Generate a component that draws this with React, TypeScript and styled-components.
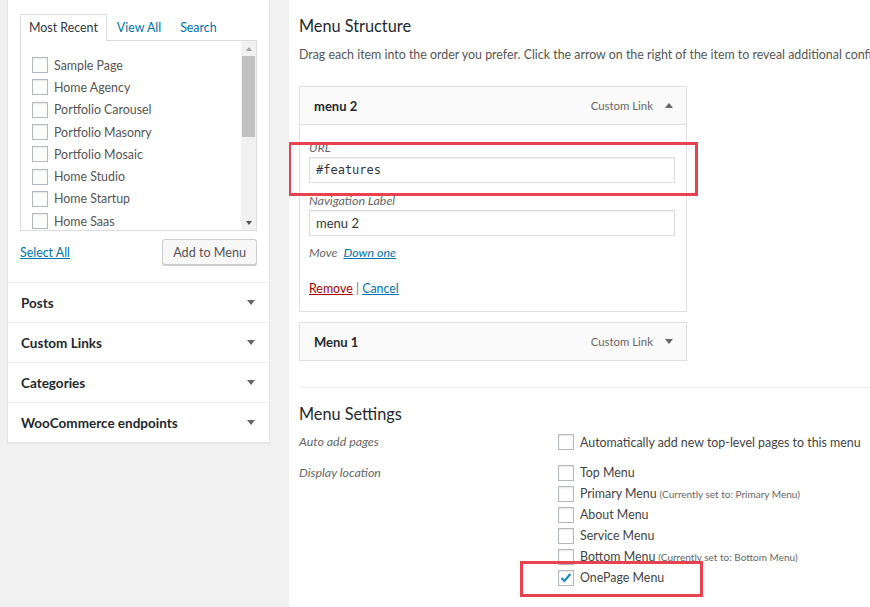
import styled, { createGlobalStyle } from "styled-components";

const GlobalStyle = createGlobalStyle`
  html, body {
    margin: 0;
    padding: 0;
    background: #f1f1f1;
  }
  body {
    font-family: Lato, "Open Sans", "Liberation Sans", sans-serif;
    font-size: 12.4px;
    color: #444;
  }
`

const Page = styled.div`
  display: flex;
  align-items: flex-start;
  height: 607px;
  padding-left: 7px;
  overflow: hidden;
`

const Sidebar = styled.aside`
  width: 263px;
  flex-shrink: 0;
  margin-right: 19px;
  background: #fff;
  border: 1px solid #e5e5e5;
  border-top: none;
  box-sizing: border-box;
  box-shadow: 0 1px 1px rgba(0, 0, 0, .04);
`

const PagesBox = styled.div`
  padding: 14px 12px 17px 12px;
`

const Tabs = styled.div`
  display: flex;
  height: 26px;
  align-items: stretch;
`

const Tab = styled.span<{ $active?: boolean }>`
  display: flex;
  align-items: center;
  padding: 0 8px 2px;
  margin-right: 1px;
  color: ${(p) => (p.$active ? "#32373c" : "#0073aa")};
  background: ${(p) => (p.$active ? "#fff" : "transparent")};
  border: 1px solid ${(p) => (p.$active ? "#ddd" : "transparent")};
  border-bottom: none;
  position: relative;
  z-index: 1;
  margin-bottom: -1px;
`

const TabPanel = styled.div`
  display: flex;
  height: 191px;
  border: 1px solid #ddd;
  box-sizing: border-box;
`

const CheckList = styled.ul`
  flex: 1;
  list-style: none;
  margin: 0;
  padding: 13px 0 0 11px;
`

const CheckRow = styled.li`
  display: flex;
  align-items: center;
  gap: 6px;
  height: 22.3px;
  color: #555;
`

const Box = styled.span`
  width: 16px;
  height: 16px;
  flex-shrink: 0;
  box-sizing: border-box;
  border: 1px solid #b4b9be;
  background: #fff;
  box-shadow: inset 0 1px 2px rgba(0, 0, 0, .1);
  display: flex;
  align-items: center;
  justify-content: center;
`

const Scrollbar = styled.div`
  width: 15px;
  background: #f1f1f1;
  display: flex;
  flex-direction: column;
  align-items: center;
`

const ScrollArrow = styled.span<{ $down?: boolean }>`
  height: 15px;
  width: 15px;
  display: flex;
  align-items: center;
  justify-content: center;
  &::before {
    content: "";
    border-left: 3.5px solid transparent;
    border-right: 3.5px solid transparent;
    ${(p) => (p.$down ? "border-top: 4px solid #505050;" : "border-bottom: 4px solid #a3a3a3;")}
  }
`

const Thumb = styled.span`
  width: 13px;
  height: 81px;
  background: #c1c1c1;
`

const Spacer = styled.span`
  flex: 1;
`

const ListFooter = styled.div`
  display: flex;
  align-items: center;
  justify-content: space-between;
  margin-top: 8px;
`

const Link = styled.a<{ $danger?: boolean; $italic?: boolean }>`
  color: ${(p) => (p.$danger ? "#a00" : "#0073aa")};
  text-decoration: underline;
  font-style: ${(p) => (p.$italic ? "italic" : "normal")};
  cursor: pointer;
`

const Button = styled.button`
  height: 26px;
  padding: 0 10px;
  font: inherit;
  font-size: 12.6px;
  color: #555;
  background: #f7f7f7;
  border: 1px solid #ccc;
  border-radius: 3px;
  box-shadow: 0 1px 0 #ccc;
`

const Section = styled.div`
  height: 40px;
  box-sizing: border-box;
  border-top: 1px solid #eee;
  display: flex;
  align-items: center;
  justify-content: space-between;
  padding: 0 14px 0 13px;
  font-weight: 700;
  font-size: 13.5px;
  color: #23282d;
`

const Caret = styled.span<{ $up?: boolean; $size?: number }>`
  width: 0;
  height: 0;
  border-left: ${(p) => (p.$size ?? 4.5)}px solid transparent;
  border-right: ${(p) => (p.$size ?? 4.5)}px solid transparent;
  ${(p) =>
    p.$up
      ? `border-bottom: ${(p.$size ?? 4.5) + 1}px solid #666;`
      : `border-top: ${(p.$size ?? 4.5) + 1}px solid #666;`}
`

const Main = styled.main`
  flex: 1;
  align-self: stretch;
  background: #fff;
  padding-left: 10px;
  white-space: nowrap;
  overflow: hidden;
`

const Heading = styled.h3`
  margin: 16px 0 0;
  line-height: 20px;
  font-size: 16.3px;
  font-weight: 400;
  color: #23282d;
`

const Description = styled.p`
  margin: 10px 0 0;
  line-height: 18px;
  color: #555;
`

const MenuItem = styled.div<{ $first?: boolean }>`
  width: 388px;
  margin-top: ${(p) => (p.$first ? 22 : 10)}px;
`

const ItemBar = styled.div`
  height: 39px;
  box-sizing: border-box;
  display: flex;
  align-items: center;
  padding: 0 13px 0 14px;
  background: #fafafa;
  border: 1px solid #dfdfdf;
  font-weight: 700;
  font-size: 13px;
  color: #23282d;
`

const ItemTitle = styled.span`
  flex: 1;
`

const ItemType = styled.span`
  font-weight: 400;
  font-size: 11.4px;
  color: #666;
  margin-right: 12px;
`

const ItemSettings = styled.div`
  height: 187px;
  box-sizing: border-box;
  border: 1px solid #dfdfdf;
  border-top: none;
  padding: 15px 11px 0 9px;
`

const Field = styled.div`
  position: relative;
  margin-bottom: 10px;
`

const FieldLabel = styled.div`
  font-style: italic;
  color: #666;
  line-height: 16px;
  margin-bottom: 1px;
`

const Input = styled.div<{ $mono?: boolean }>`
  height: 26px;
  box-sizing: border-box;
  border: 1px solid #ddd;
  box-shadow: inset 0 1px 2px rgba(0, 0, 0, .07);
  display: flex;
  align-items: center;
  padding: 0 6px;
  color: #32373c;
  font-family: ${(p) => (p.$mono ? '"DejaVu Sans Mono", "Liberation Mono", monospace' : "inherit")};
  font-size: ${(p) => (p.$mono ? "12px" : "13px")};
`

const Highlight = styled.span<{ $top: number; $left: number; $width: number; $height: number }>`
  position: absolute;
  top: ${(p) => p.$top}px;
  left: ${(p) => p.$left}px;
  width: ${(p) => p.$width}px;
  height: ${(p) => p.$height}px;
  box-sizing: border-box;
  border: 3px solid #e8414f;
  pointer-events: none;
`

const MoveLine = styled.div`
  line-height: 16px;
  margin-top: -1px;
  font-style: italic;
  color: #666;
  display: flex;
  gap: 6px;
`

const Actions = styled.div`
  margin-top: 20px;
  line-height: 16px;
  color: #777;
`

const Divider = styled.hr`
  border: none;
  border-top: 1px solid #eee;
  margin: 26px 0 0;
`

const SettingsGrid = styled.div`
  display: grid;
  grid-template-columns: 259px 1fr;
  margin-top: 7px;
  row-gap: 9px;
`

const SettingLabel = styled.div`
  font-style: italic;
  color: #666;
  line-height: 22px;
`

const Options = styled.div`
  display: flex;
  flex-direction: column;
`

const Option = styled.div`
  position: relative;
  display: flex;
  align-items: center;
  gap: 6px;
  height: 21px;
  color: #444;
`

const OptionFirst = styled(Option)`
  height: 22px;
`

const Note = styled.span`
  font-size: 10px;
  color: #666;
  margin-left: 3px;
`

const Check = () => (
  <svg width="16" height="16" viewBox="0 0 16 16">
    <path d="M2.8 8.2 L6.2 11.4 L13 3.4" fill="none" stroke="#1e8cbe" strokeWidth="2.6" />
  </svg>
)

const recentPages = [
  "Sample Page",
  "Home Agency",
  "Portfolio Carousel",
  "Portfolio Masonry",
  "Portfolio Mosaic",
  "Home Studio",
  "Home Startup",
  "Home Saas",
]

const sections = ["Posts", "Custom Links", "Categories", "WooCommerce endpoints"]

const locations: { name: string; note?: string; checked?: boolean }[] = [
  { name: "Top Menu" },
  { name: "Primary Menu", note: "(Currently set to: Primary Menu)" },
  { name: "About Menu" },
  { name: "Service Menu" },
  { name: "Bottom Menu", note: "(Currently set to: Bottom Menu)" },
  { name: "OnePage Menu", checked: true },
]

const App = () => {
  return (
    <>
      <GlobalStyle />
      <Page>
        <Sidebar>
          <PagesBox>
            <Tabs>
              <Tab $active>Most Recent</Tab>
              <Tab>View All</Tab>
              <Tab>Search</Tab>
            </Tabs>
            <TabPanel>
              <CheckList>
                {recentPages.map((p) => (
                  <CheckRow key={p}>
                    <Box />
                    {p}
                  </CheckRow>
                ))}
              </CheckList>
              <Scrollbar>
                <ScrollArrow />
                <Thumb />
                <Spacer />
                <ScrollArrow $down />
              </Scrollbar>
            </TabPanel>
            <ListFooter>
              <Link>Select All</Link>
              <Button>Add to Menu</Button>
            </ListFooter>
          </PagesBox>
          {sections.map((s) => (
            <Section key={s}>
              {s}
              <Caret />
            </Section>
          ))}
        </Sidebar>

        <Main>
          <Heading>Menu Structure</Heading>
          <Description>
            Drag each item into the order you prefer. Click the arrow on the right of the item to reveal additional configuration options.
          </Description>

          <MenuItem $first>
            <ItemBar>
              <ItemTitle>menu 2</ItemTitle>
              <ItemType>Custom Link</ItemType>
              <Caret $up $size={4} />
            </ItemBar>
            <ItemSettings>
              <Field>
                <FieldLabel>URL</FieldLabel>
                <Input $mono>#features</Input>
                <Highlight $top={2} $left={-21} $width={410} $height={54} />
              </Field>
              <Field>
                <FieldLabel>Navigation Label</FieldLabel>
                <Input>menu 2</Input>
              </Field>
              <MoveLine>
                Move <Link $italic>Down one</Link>
              </MoveLine>
              <Actions>
                <Link $danger>Remove</Link> | <Link>Cancel</Link>
              </Actions>
            </ItemSettings>
          </MenuItem>

          <MenuItem>
            <ItemBar>
              <ItemTitle>Menu 1</ItemTitle>
              <ItemType>Custom Link</ItemType>
              <Caret $size={4} />
            </ItemBar>
          </MenuItem>

          <Divider />
          <Heading>Menu Settings</Heading>

          <SettingsGrid>
            <SettingLabel>Auto add pages</SettingLabel>
            <Options>
              <OptionFirst>
                <Box />
                Automatically add new top-level pages to this menu
              </OptionFirst>
            </Options>
            <SettingLabel>Display location</SettingLabel>
            <Options>
              {locations.map((l) => (
                <Option key={l.name}>
                  <Box>{l.checked && <Check />}</Box>
                  <span>
                    {l.name}
                    {l.note && <Note>{l.note}</Note>}
                  </span>
                  {l.checked && <Highlight $top={-6} $left={-38} $width={183} $height={36} />}
                </Option>
              ))}
            </Options>
          </SettingsGrid>
        </Main>
      </Page>
    </>
  )
}

export default App;
